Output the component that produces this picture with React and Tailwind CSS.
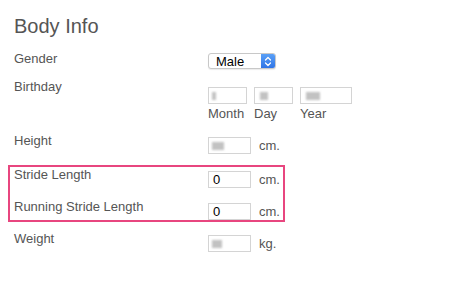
import React from "react";

const font = { fontFamily: '"Liberation Sans", Arial, sans-serif' };

// blurred placeholder for hidden values
const Smudge = ({ w }) => (
  <div className={`h-[8px] ${w} bg-[#9a9a9a] opacity-60 blur-[1px] ml-[3px]`} />
);

const Box = ({ w, children }) => (
  <div className={`${w} h-[17px] flex items-center bg-white border border-[#d4d4d4] text-[13px] text-black leading-none`}>
    {children}
  </div>
);

const Row = ({ label, mt, children }) => (
  <div className={`flex items-start ${mt}`}>
    <div className="w-[194px] text-[13px] leading-4 text-[#555]">{label}</div>
    <div className="flex items-center gap-[8px] mt-[4px]">{children}</div>
  </div>
);

const Unit = ({ children }) => (
  <span className="text-[13px] leading-4 text-[#555]">{children}</span>
);

export default function App() {
  return (
    <div className="w-[460px] h-[281px] bg-white overflow-hidden" style={font}>
      <div className="pl-[14px] pt-[14px]">
        <h1 className="text-[20px] leading-6 text-[#555]">Body Info</h1>
      </div>

      <div className="pl-[14px]">
        {/* Gender */}
        <div className="flex items-start mt-[13px]">
          <div className="w-[194px] text-[13px] leading-4 text-[#555]">Gender</div>
          <div className="mt-[2px] w-[68px] h-[16px] flex rounded-[3px] border border-[#c8c8c8] bg-white overflow-hidden shadow-[0_1px_1px_rgba(0,0,0,0.08)]">
            <div className="flex-1 flex items-center pl-[7px] text-[13px] leading-none text-black">Male</div>
            <div className="w-[14px] h-full bg-gradient-to-b from-[#5aa0f7] to-[#2f74e6] flex items-center justify-center">
              <svg width="8" height="11" viewBox="0 0 8 11" fill="none" stroke="white" strokeWidth="1.3" strokeLinecap="round" strokeLinejoin="round">
                <path d="M1.5 4 L4 1.5 L6.5 4" />
                <path d="M1.5 7 L4 9.5 L6.5 7" />
              </svg>
            </div>
          </div>
        </div>

        {/* Birthday */}
        <div className="flex items-start mt-[10px]">
          <div className="w-[194px] text-[13px] leading-4 text-[#555]">Birthday</div>
          <div className="mt-[8px] flex gap-[7px]">
            <div className="flex flex-col">
              <Box w="w-[39px]"><Smudge w="w-[4px]" /></Box>
              <span className="mt-[2px] text-[13px] leading-4 text-[#555]">Month</span>
            </div>
            <div className="flex flex-col">
              <Box w="w-[39px]"><div className="ml-[2px]"><Smudge w="w-[8px]" /></div></Box>
              <span className="mt-[2px] text-[13px] leading-4 text-[#555]">Day</span>
            </div>
            <div className="flex flex-col">
              <Box w="w-[52px]"><div className="ml-[2px]"><Smudge w="w-[14px]" /></div></Box>
              <span className="mt-[2px] text-[13px] leading-4 text-[#555]">Year</span>
            </div>
          </div>
        </div>

        {/* Height */}
        <Row label="Height" mt="mt-[11px]">
          <Box w="w-[43px]"><Smudge w="w-[12px]" /></Box>
          <Unit>cm.</Unit>
        </Row>
      </div>

      {/* highlighted stride rows */}
      <div className="ml-[8px] mt-[11px] w-[277px] border-2 border-[#e8467f] pl-[4px]">
        <Row label="Stride Length" mt="mt-0">
          <Box w="w-[43px]"><span className="pl-[4px]">0</span></Box>
          <Unit>cm.</Unit>
        </Row>
        <Row label="Running Stride Length" mt="mt-[11px]">
          <Box w="w-[43px]"><span className="pl-[4px]">0</span></Box>
          <Unit>cm.</Unit>
        </Row>
      </div>

      <div className="pl-[14px]">
        <Row label="Weight" mt="mt-[9px]">
          <Box w="w-[43px]"><Smudge w="w-[10px]" /></Box>
          <Unit>kg.</Unit>
        </Row>
      </div>
    </div>
  );
}
